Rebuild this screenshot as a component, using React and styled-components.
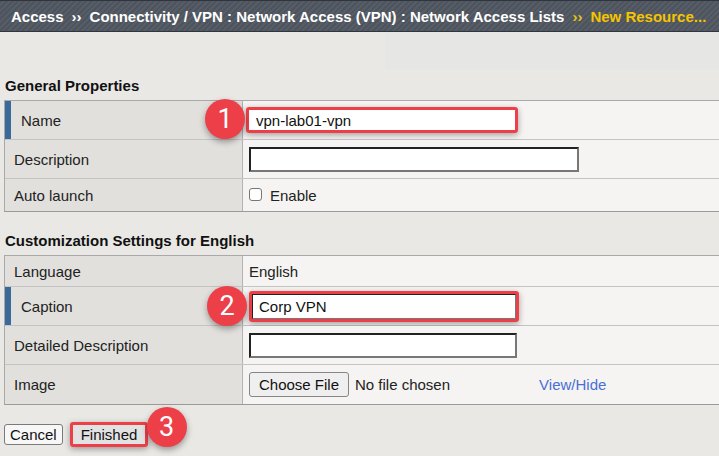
import React from 'react';
import styled, { createGlobalStyle } from 'styled-components';

const GlobalStyle = createGlobalStyle`
    html, body {
        margin: 0;
        padding: 0;
        background: #e9e8e5;
        overflow: hidden;
    }
    body {
        font-family: "Liberation Sans", Arial, sans-serif;
        color: #222;
    }
`;

const Page = styled.div`
    width: 719px;
    height: 456px;
    overflow: hidden;
    display: flex;
    flex-direction: column;
`;

const Header = styled.div`
    height: 30px;
    border-top: 1px solid #2f353c;
    border-bottom: 1px solid #30363d;
    background: repeating-linear-gradient(135deg, #4d545d 0 2px, #565d66 2px 4px);
    display: flex;
    align-items: center;
    padding-left: 11px;
    font-size: 15px;
    font-weight: bold;
    color: #ffffff;
    white-space: nowrap;
`;

const Sep = styled.span`
    margin: 0 8px;
    color: ${({ $current }) => ($current ? '#e8c21a' : '#ffffff')};
`;

const Current = styled.span`
    color: #f5c400;
`;

const NoticeRow = styled.div`
    height: 37px;
    display: flex;
`;

const NoticeSpacer = styled.div`
    flex: 0 0 385px;
`;

const NoticePanel = styled.div`
    flex: 1;
    background: #e6e6e5;
`;

const SectionTitle = styled.div`
    font-size: 15px;
    font-weight: bold;
    line-height: 16px;
    padding: ${({ $top }) => $top}px 0 ${({ $bottom }) => $bottom}px 5px;
    color: #111;
`;

const Table = styled.div`
    margin-left: 4px;
    margin-right: -4px;
    border: 1px solid #a9a9a9;
    border-bottom-color: #9a9a9a;
    display: flex;
    flex-direction: column;
`;

const Row = styled.div`
    display: grid;
    grid-template-columns: 238px 1fr;
    height: ${({ $h }) => $h}px;
    & + & {
        border-top: 1px solid #c4c4c4;
    }
`;

const Label = styled.div`
    background: #e1e0dd;
    border-right: 1px solid #b2b2b2;
    display: flex;
    align-items: center;
    padding-left: ${({ $active }) => ($active ? '10px' : '9px')};
    font-size: 15px;
    color: #222;
    ${({ $active }) => $active && 'border-left: 6px solid #3a6a99;'}
`;

const Value = styled.div`
    position: relative;
    background: #f5f4f2;
    display: flex;
    align-items: center;
    padding-left: 6px;
    font-size: 15px;
    color: #222;
`;

const Highlight = styled.div`
    border: 3px solid #ec3f48;
    border-radius: 3px;
    box-shadow: 0 2px 6px rgba(0, 0, 0, 0.35);
    display: flex;
    margin-left: ${({ $ml }) => $ml || 0}px;
`;

const TextInput = styled.input`
    box-sizing: border-box;
    width: ${({ $w }) => $w}px;
    height: ${({ $h }) => $h || 25}px;
    font-family: "Liberation Sans", Arial, sans-serif;
    font-size: 15px;
    color: #111;
    padding: 0 6px;
    background: #ffffff;
    border: ${({ $plain }) => ($plain ? '1px solid #ffffff' : '2px solid #777')};
    ${({ $plain }) => !$plain && 'border-top-color: #222; border-left-color: #222;'}
    outline: none;
`;

const Checkbox = styled.span`
    box-sizing: border-box;
    width: 13px;
    height: 13px;
    border: 1px solid #767676;
    border-radius: 3px;
    background: #fff;
    margin-right: 8px;
    margin-top: -2px;
`;

const FileButton = styled.button`
    box-sizing: border-box;
    height: 25px;
    width: 100px;
    font-family: "Liberation Sans", Arial, sans-serif;
    font-size: 15px;
    color: #111;
    background: #efefef;
    border: 1px solid #858585;
    border-radius: 3px;
    padding: 0;
    margin-right: 6px;
`;

const Link = styled.span`
    color: #4a6fd6;
    margin-left: 89px;
`;

const Actions = styled.div`
    display: flex;
    align-items: center;
    padding: 17px 0 0 4px;
    gap: 7px;
`;

const Button = styled.button`
    box-sizing: border-box;
    height: ${({ $h }) => $h || 21}px;
    font-family: "Liberation Sans", Arial, sans-serif;
    font-size: 15px;
    color: #111;
    background: ${({ $bg }) => $bg || '#f7f7f7'};
    border: 1px solid #7a7a7a;
    border-radius: 3px;
    padding: 0 ${({ $px }) => $px || 5}px;
`;

const FinishWrap = styled.div`
    position: relative;
    border: 3px solid #ec3f48;
    border-radius: 3px;
    box-shadow: 0 2px 6px rgba(0, 0, 0, 0.35);
    display: flex;
`;

const Badge = styled.div`
    position: absolute;
    left: ${({ $x }) => $x}px;
    top: ${({ $y }) => $y}px;
    width: 40px;
    height: 40px;
    border-radius: 50%;
    background: #ec3f48;
    box-shadow: 0 3px 6px rgba(0, 0, 0, 0.35);
    color: #ffffff;
    font-family: Roboto, "Liberation Sans", sans-serif;
    font-size: 27px;
    display: flex;
    align-items: center;
    justify-content: center;
    z-index: 2;
`;

const App = () => {
    return (
        <Page>
            <GlobalStyle />
            <Header>
                Access<Sep>››</Sep>Connectivity / VPN : Network Access (VPN) : Network Access Lists
                <Sep $current>››</Sep>
                <Current>New Resource...</Current>
            </Header>
            <NoticeRow>
                <NoticeSpacer />
                <NoticePanel />
            </NoticeRow>

            <SectionTitle $top={9} $bottom={6}>General Properties</SectionTitle>
            <Table>
                <Row $h={38}>
                    <Label $active>Name</Label>
                    <Value>
                        <Badge $x={-38} $y={-2}>1</Badge>
                        <Highlight $ml={-3}>
                            <TextInput $plain $w={266} $h={20} defaultValue="vpn-lab01-vpn" />
                        </Highlight>
                    </Value>
                </Row>
                <Row $h={38}>
                    <Label>Description</Label>
                    <Value>
                        <TextInput $w={330} />
                    </Value>
                </Row>
                <Row $h={32}>
                    <Label>Auto launch</Label>
                    <Value>
                        <Checkbox />
                        Enable
                    </Value>
                </Row>
            </Table>

            <SectionTitle $top={21} $bottom={6}>Customization Settings for English</SectionTitle>
            <Table>
                <Row $h={30}>
                    <Label>Language</Label>
                    <Value>English</Value>
                </Row>
                <Row $h={38}>
                    <Label $active>Caption</Label>
                    <Value>
                        <Badge $x={-36} $y={-1}>2</Badge>
                        <Highlight>
                            <TextInput $w={264} $h={25} defaultValue="Corp VPN" style={{ borderWidth: 1 }} />
                        </Highlight>
                    </Value>
                </Row>
                <Row $h={38}>
                    <Label>Detailed Description</Label>
                    <Value>
                        <TextInput $w={268} />
                    </Value>
                </Row>
                <Row $h={39}>
                    <Label>Image</Label>
                    <Value>
                        <FileButton>Choose File</FileButton>
                        No file chosen
                        <Link>View/Hide</Link>
                    </Value>
                </Row>
            </Table>

            <Actions>
                <Button>Cancel</Button>
                <FinishWrap>
                    <Button $bg="#e2e2e2" $h={19} $px={8} style={{ border: 'none' }}>Finished</Button>
                    <Badge $x={74} $y={-18}>3</Badge>
                </FinishWrap>
            </Actions>
        </Page>
    );
};

export default App;
